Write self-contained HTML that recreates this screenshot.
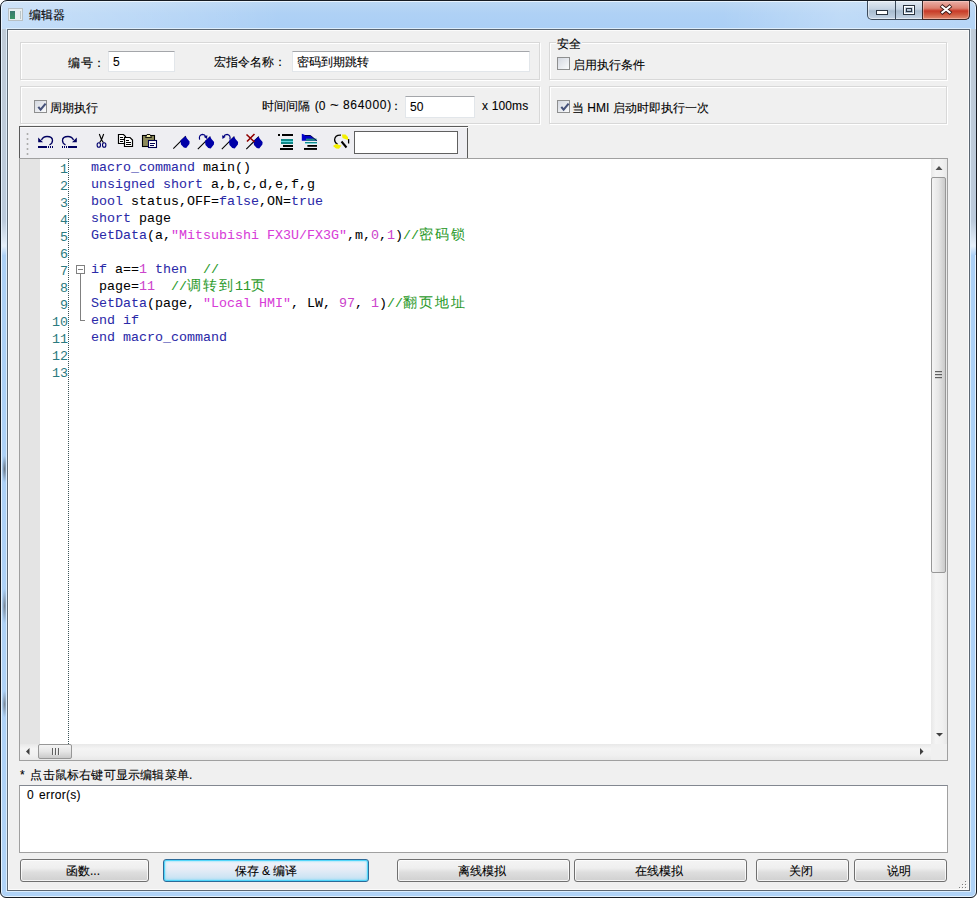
<!DOCTYPE html>
<html><head><meta charset="utf-8">
<style>
*{margin:0;padding:0;box-sizing:border-box}
html,body{width:977px;height:898px;overflow:hidden;background:#fff}
body{position:relative;font-family:"Liberation Sans",sans-serif;font-size:12px;color:#000;-webkit-text-stroke:0.1px #000}
.a{position:absolute;white-space:pre}
#win{left:0;top:0;width:977px;height:898px;border:1px solid #161b22;border-radius:7px 7px 6px 6px;
 background:linear-gradient(90deg,rgba(255,255,255,0.32) 0px,rgba(255,255,255,0.18) 140px,rgba(255,255,255,0) 280px,rgba(255,255,255,0) 720px,rgba(255,255,255,0.22) 840px,rgba(255,255,255,0.12) 977px) 0 0/100% 29px no-repeat,linear-gradient(#bcd8f4 0px,#afd1f5 12px,#aacff5 29px,#b0d3f7 100%);box-shadow:inset 0 0 0 1px rgba(240,248,255,0.85)}
#client{left:7px;top:29px;width:963px;height:862px;border:1px solid #5c6772;background:#f0f0f0;box-shadow:0 0 0 1px rgba(225,240,252,0.9),inset 0 0 0 1px #fbfbfb}
.gb{border:1px solid #d8d8d8;box-shadow:inset 1px 1px 0 #fff,1px 1px 0 #fff}
.inp{background:#fff;border:1px solid #e2e6ea;border-top-color:#a4a6aa;}
.cb{width:13px;height:13px;border:1px solid #8e8f8f;background:linear-gradient(135deg,#d4d8e0,#fafbfc)}
.cb svg{position:absolute;left:1px;top:1px}
.btn{border:1px solid #707070;border-radius:3px;background:linear-gradient(#f4f4f4 0%,#efefef 38%,#dedede 58%,#d0d0d0 100%);box-shadow:inset 0 0 0 1px rgba(255,255,255,0.75);text-align:center;line-height:22px;padding-right:3px}
.mono{font-family:"Liberation Mono",monospace;font-size:13.33px;line-height:17px;-webkit-text-stroke:0.05px currentColor}
.k{color:#2a2aa8}.s{color:#d83cd8}.n{color:#cc44cc}.c{color:#2a9a2a}
.cj{font-size:14px;letter-spacing:2px}
.ln{font-family:"Liberation Mono",monospace;font-size:13.33px;color:#2a7a80;text-align:right;width:41px;line-height:17px;-webkit-text-stroke:0}
</style></head><body>
<div id="win" class="a"></div>
<!-- title -->
<div class="a" style="left:8px;top:8px;width:15px;height:13px;background:#e8eef0;border:1px solid #b8c0c4"></div>
<div class="a" style="left:10px;top:11px;width:5px;height:8px;background:linear-gradient(#3a7870,#3a9464)"></div><div class="a" style="left:20px;top:11px;width:1px;height:8px;background:#b8c4c8"></div>
<div class="a" style="left:29px;top:7px;font-size:12px">编辑器</div>
<!-- caption buttons -->
<div class="a" style="left:867px;top:1px;width:103px;height:19px;border:1px solid #3c4a5a;border-top:none;border-radius:0 0 5px 5px;overflow:hidden;background:linear-gradient(#e2eaf3,#c4d2e2 45%,#a8bccf 55%,#c4d4e6);box-shadow:inset 0 0 0 1px rgba(255,255,255,0.5)"></div>
<div class="a" style="left:922px;top:1px;width:48px;height:19px;border:1px solid #3c2a2a;border-top:none;border-radius:0 0 5px 0;background:linear-gradient(#eab0a8,#dc8070 40%,#c83a28 55%,#d05a40 75%,#e08a70);box-shadow:inset 0 0 0 1px rgba(255,220,210,0.45)"></div>
<div class="a" style="left:895px;top:1px;width:1px;height:18px;background:#3c4a5a"></div>

<svg class="a" style="left:867px;top:0" width="103" height="20" viewBox="867 0 103 20">
<rect x="876.5" y="10.5" width="11" height="4" fill="#fff" stroke="#2a3440" stroke-width="1"/>
<rect x="903.5" y="5.5" width="11" height="9" fill="none" stroke="#2a3440" stroke-width="1"/>
<rect x="904.5" y="6.5" width="9" height="7" fill="none" stroke="#fff" stroke-width="1"/>
<rect x="906.5" y="8.5" width="5" height="3" fill="none" stroke="#2a3440" stroke-width="1"/>
<path d="M941 5.5 L951 13.5 M951 5.5 L941 13.5" stroke="#3a1a18" stroke-width="4"/>
<path d="M941.5 6 L950.5 13 M950.5 6 L941.5 13" stroke="#fff" stroke-width="2.2"/>
</svg>
<div class="a" style="left:2px;top:29px;width:5px;height:226px;background:linear-gradient(#c0ccd8,#bccbdc 85%,#e6f0fa 96%,#b0d2f6)"></div>
<div class="a" style="left:970px;top:29px;width:6px;height:226px;background:linear-gradient(#c0ccd8,#bccbdc 85%,#e6f0fa 96%,#b0d2f6)"></div>
<div class="a" style="left:2px;top:455px;width:5px;height:28px;background:radial-gradient(ellipse at center,#6a7888 0%,rgba(106,120,136,0) 70%)"></div>
<div class="a" style="left:2px;top:588px;width:5px;height:36px;background:radial-gradient(ellipse at center,#7a8898 0%,rgba(122,136,152,0) 70%)"></div>
<div class="a" style="left:2px;top:690px;width:5px;height:28px;background:radial-gradient(ellipse at center,#7a8898 0%,rgba(122,136,152,0) 70%)"></div>
<div id="client" class="a"></div>
<!-- group boxes -->
<div class="a gb" style="left:20px;top:42px;width:520px;height:38px"></div>
<div class="a gb" style="left:20px;top:86px;width:520px;height:38px"></div>
<div class="a gb" style="left:549px;top:42px;width:398px;height:38px"></div>
<div class="a gb" style="left:549px;top:86px;width:398px;height:38px"></div>

<!-- row 1 -->
<div class="a" style="left:68px;top:55px;letter-spacing:0.5px">编号：</div>
<div class="a inp" style="left:108px;top:51px;width:67px;height:21px"></div>
<div class="a" style="left:113px;top:55px">5</div>
<div class="a" style="left:214px;top:54px">宏指令名称：</div>
<div class="a inp" style="left:292px;top:51px;width:238px;height:21px"></div>
<div class="a" style="left:297px;top:54px">密码到期跳转</div>
<div class="a" style="left:556px;top:36px;background:#f0f0f0;padding:0 1px">安全</div>
<div class="a cb" style="left:557px;top:57px"></div>
<div class="a" style="left:573px;top:57px">启用执行条件</div>

<!-- row 2 -->
<div class="a cb" style="left:34px;top:100px"><svg width="11" height="11"><path d="M2.3 4.8 L4.6 7.6 L9.6 1.6" stroke="#46527a" stroke-width="2.1" fill="none"/></svg></div>
<div class="a" style="left:50px;top:100px">周期执行</div>
<div class="a" style="left:262px;top:98px;word-spacing:1.5px">时间间隔 (0</div><div class="a" style="left:330px;top:98px;transform:scaleX(1.25);transform-origin:0 0">~</div><div class="a" style="left:343px;top:98px;letter-spacing:0.7px">864000)</div><div class="a" style="left:390px;top:98px">：</div>
<div class="a inp" style="left:405px;top:96px;width:70px;height:22px"></div>
<div class="a" style="left:410px;top:100px">50</div>
<div class="a" style="left:482px;top:99px;letter-spacing:0.15px">x 100ms</div>
<div class="a cb" style="left:557px;top:100px"><svg width="11" height="11"><path d="M2.3 4.8 L4.6 7.6 L9.6 1.6" stroke="#46527a" stroke-width="2.1" fill="none"/></svg></div>
<div class="a" style="left:572px;top:100px">当 HMI 启动时即执行一次</div>

<!-- toolbar -->
<div class="a" style="left:19px;top:126px;width:449px;height:34px;border:1px solid #5a5a5a;border-bottom:none;background:#eeeef2"></div>
<svg class="a" style="left:19px;top:126px" width="450" height="33" viewBox="19 126 450 33">
<rect x="20" y="127" width="448" height="1" fill="#fafafa"/>
<g fill="#a8a8a8"><rect x="26.5" y="133" width="2" height="2" rx="1"/><rect x="26.5" y="138" width="2" height="2" rx="1"/><rect x="26.5" y="143" width="2" height="2" rx="1"/><rect x="26.5" y="148" width="2" height="2" rx="1"/><rect x="26.5" y="153" width="2" height="2" rx="1"/></g>
<g>
<path d="M41.5 140 Q43 136.5 47 136.5 Q52.5 136.5 52.5 140.5 Q52.5 143.5 49.5 144.8" stroke="#000060" stroke-width="1.3" fill="none"/>
<polygon points="38.2,137.6 38.2,142.3 43,142.3" fill="#000060"/>
<rect x="38" y="146" width="9" height="2" fill="#000060"/>
<rect x="48" y="146" width="1" height="2" fill="#000060"/><rect x="50" y="146" width="1" height="2" fill="#000060"/><rect x="52" y="146" width="1" height="2" fill="#000060"/>
</g>
<g transform="matrix(-1 0 0 1 115 0)">
<path d="M41.5 140 Q43 136.5 47 136.5 Q52.5 136.5 52.5 140.5 Q52.5 143.5 49.5 144.8" stroke="#000060" stroke-width="1.3" fill="none"/>
<polygon points="38.2,137.6 38.2,142.3 43,142.3" fill="#000060"/>
<rect x="38" y="146" width="9" height="2" fill="#000060"/>
<rect x="48" y="146" width="1" height="2" fill="#000060"/><rect x="50" y="146" width="1" height="2" fill="#000060"/><rect x="52" y="146" width="1" height="2" fill="#000060"/>
</g>
<!-- cut -->
<path d="M99.3 134 L101.5 139.8 L99.6 142.6 M103.7 134 L101.5 139.8 L103.4 142.6" stroke="#000" stroke-width="1.1" fill="none"/>
<ellipse cx="98.8" cy="145" rx="1.7" ry="2.3" stroke="#000070" stroke-width="1.1" fill="none"/>
<ellipse cx="104.2" cy="145" rx="1.7" ry="2.3" stroke="#000070" stroke-width="1.1" fill="none"/>
<!-- copy -->
<path d="M118.5 134.5 H123.5 L125.5 136.5 V143.5 H118.5 Z" fill="#fff" stroke="#000" stroke-width="1.2"/>
<path d="M120 137.5 H123 M120 139.5 H124 M120 141.5 H123" stroke="#000" stroke-width="1"/>
<path d="M124.5 137.5 H130 L132.5 140 V146.5 H124.5 Z" fill="#fff" stroke="#000" stroke-width="1.2"/>
<path d="M126 140.5 H129 M126 142.5 H131 M126 144.5 H131" stroke="#000" stroke-width="1"/>
<!-- paste -->
<rect x="142.5" y="135.5" width="12" height="11" fill="#8c8a5a" stroke="#000" stroke-width="1.1"/>
<path d="M145.5 137.5 L147 134.5 H150 L151.5 137.5 Z" fill="#f4f0b0" stroke="#000" stroke-width="0.9"/>
<rect x="148.5" y="140.5" width="8" height="7" fill="#fff" stroke="#000050" stroke-width="1.1"/>
<path d="M150 143.5 H155 M150 145.5 H154" stroke="#000050" stroke-width="1"/>
<!-- flags -->
<g>
<path d="M173.3 148.6 L185.8 136.1" stroke="#000" stroke-width="1.1"/>
<polygon points="180.4,140.6 185.6,136 187,138.6 189.6,141.6 189.4,144 186.2,148 183.8,147.6 181,144.6" fill="#0000a8"/>
</g>
<g transform="translate(24.5 0.5)">
<path d="M173.3 148.6 L185.8 136.1" stroke="#000" stroke-width="1.1"/>
<polygon points="180.4,140.6 185.6,136 187,138.6 189.6,141.6 189.4,144 186.2,148 183.8,147.6 181,144.6" fill="#0000a8"/>
</g>
<path d="M199.6 139.6 Q198.6 135 202.4 134.4 Q205 134.4 205.6 136.5" stroke="#000080" stroke-width="1.2" fill="none"/>
<polygon points="203.8,136.8 207.4,135.2 207,139 " fill="#000080"/>
<g transform="translate(48.5 0.5)">
<path d="M173.3 148.6 L185.8 136.1" stroke="#000" stroke-width="1.1"/>
<polygon points="180.4,140.6 185.6,136 187,138.6 189.6,141.6 189.4,144 186.2,148 183.8,147.6 181,144.6" fill="#0000a8"/>
</g>
<g transform="matrix(-1 0 0 1 429.5 0)"><path d="M199.6 139.6 Q198.6 135 202.4 134.4 Q205 134.4 205.6 136.5" stroke="#000080" stroke-width="1.2" fill="none"/>
<polygon points="203.8,136.8 207.4,135.2 207,139 " fill="#000080"/></g>
<g transform="translate(73 0.5)">
<path d="M173.3 148.6 L185.8 136.1" stroke="#000" stroke-width="1.1"/>
<polygon points="180.4,140.6 185.6,136 187,138.6 189.6,141.6 189.4,144 186.2,148 183.8,147.6 181,144.6" fill="#0000a8"/>
</g>
<path d="M246.5 134.5 L254.5 142 M254.5 134 L247 141.5" stroke="#900000" stroke-width="1.6"/>
<!-- indent -->
<rect x="278" y="134" width="2" height="2" fill="#000"/>
<rect x="282" y="134" width="11" height="2" fill="#000"/>
<rect x="281" y="139" width="12" height="2" fill="#108888"/><rect x="281" y="141" width="12" height="1" fill="#60d8e0"/>
<rect x="281" y="142" width="12" height="2" fill="#108888"/><rect x="281" y="144" width="12" height="0" fill="#60d8e0"/>
<rect x="283" y="145" width="10" height="2" fill="#000"/>
<rect x="280" y="148" width="13" height="2" fill="#000"/>
<!-- outdent -->
<polygon points="301.8,133.8 304,134.5 305.5,135.5 310.5,135.5 316.8,140.8 301.8,140.8" fill="#0000c8"/>
<rect x="306" y="138.6" width="10.6" height="2.2" fill="#208080"/>
<path d="M305 135.5 H310.5 L316.8 140.8" stroke="#000050" stroke-width="1" fill="none"/>
<rect x="305" y="142" width="12" height="1.2" fill="#188888"/><rect x="305" y="143.2" width="12" height="0.8" fill="#70d8e0"/>
<rect x="307.4" y="145" width="9.6" height="1.8" fill="#000"/>
<rect x="304" y="148" width="13" height="1.9" fill="#000"/>
<!-- find/replace -->
<path d="M341 135.2 Q335 134.8 334.6 139.8 Q334.8 143 337.6 144.4" stroke="#000" stroke-width="1.3" fill="none"/>
<path d="M341.5 141.5 L346.5 147.5" stroke="#000" stroke-width="2"/>
<path d="M348.6 139 V143.5" stroke="#000" stroke-width="1.3"/>
<polygon points="342,134.5 345.5,134.5 348,137 348.2,140 345,139 342.5,138" fill="#f4f000"/>
<polygon points="333,146 336.5,143.8 339,145 341.5,145.5 339,148.8 336,148.5" fill="#f4f000"/>
</svg>
<div class="a inp" style="left:354px;top:131px;width:104px;height:23px;border:1px solid #606060"></div>

<!-- editor -->
<div class="a" style="left:19px;top:158px;width:929px;height:603px;border:1px solid #a0a0a0;background:#fff"></div>
<div class="a" style="left:20px;top:159px;width:20px;height:585px;background:#e4e4e4"></div>
<div class="a" style="left:68px;top:159px;width:1px;height:585px;background:repeating-linear-gradient(#3c5458 0 1px,transparent 1px 2px)"></div>

<div id="lns" class="a" style="left:27px;top:161px;white-space:normal"><div class="ln">1</div><div class="ln">2</div><div class="ln">3</div><div class="ln">4</div><div class="ln">5</div><div class="ln">6</div><div class="ln">7</div><div class="ln">8</div><div class="ln">9</div><div class="ln">10</div><div class="ln">11</div><div class="ln">12</div><div class="ln">13</div>
</div>

<div id="code" class="a mono" style="left:91px;top:159px"><span class="k">macro_command</span> main()
<span class="k">unsigned</span> <span class="k">short</span> a,b,c,d,e,f,g
<span class="k">bool</span> status,OFF=<span class="k">false</span>,ON=<span class="k">true</span>
<span class="k">short</span> page
<span class="k">GetData</span>(a,<span class="s">"Mitsubishi FX3U/FX3G"</span>,m,<span class="n">0</span>,<span class="n">1</span>)<span class="c">//<span class="cj">密码锁</span></span>

<span class="k">if</span> a==<span class="n">1</span> <span class="k">then</span>  <span class="c">//</span>
 page=<span class="n">11</span>  <span class="c">//<span class="cj">调转到</span>11<span class="cj">页</span></span>
<span class="k">SetData</span>(page, <span class="s">"Local HMI"</span>, LW, <span class="n">97</span>, <span class="n">1</span>)<span class="c">//<span class="cj">翻页地址</span></span>
<span class="k">end</span> <span class="k">if</span>
<span class="k">end</span> <span class="k">macro_command</span>
</div>

<!-- fold markers -->
<div class="a" style="left:76px;top:265px;width:9px;height:9px;border:1px solid #808080;background:#fff"></div>
<div class="a" style="left:78px;top:269px;width:5px;height:1px;background:#808080"></div>
<div class="a" style="left:80px;top:274px;width:1px;height:47px;background:#808080"></div>
<div class="a" style="left:80px;top:320px;width:5px;height:1px;background:#808080"></div>

<!-- v scrollbar -->
<div class="a" style="left:931px;top:159px;width:16px;height:585px;background:linear-gradient(90deg,#e8e8e8,#f4f4f4 30%,#f0f0f0 70%,#e8e8e8)"></div>
<div class="a" style="left:931px;top:177px;width:15px;height:396px;border:1px solid #979797;border-radius:2px;background:linear-gradient(90deg,#f4f4f4,#e6e6e6 50%,#cacaca 100%)"></div>
<!-- h scrollbar -->
<div class="a" style="left:20px;top:744px;width:911px;height:16px;background:linear-gradient(#e8e8e8,#f4f4f4 30%,#f0f0f0 70%,#e8e8e8)"></div>
<div class="a" style="left:38px;top:744px;width:34px;height:15px;border:1px solid #979797;border-radius:2px;background:linear-gradient(#f4f4f4,#e6e6e6 50%,#cacaca 100%)"></div>
<div class="a" style="left:931px;top:744px;width:16px;height:16px;background:#f0f0f0"></div>
<svg class="a" style="left:0;top:0" width="977" height="898" viewBox="0 0 977 898">
<polygon points="935.5,170 939,166 942.5,170" fill="#505050"/>
<polygon points="936,733 939.5,736.5 943,733" fill="#404040"/>
<polygon points="29.5,748 26,751.5 29.5,755" fill="#404040"/>
<polygon points="920,748 923.5,751.5 920,755" fill="#404040"/>
<g fill="#606060"><rect x="52" y="748" width="1.2" height="7"/><rect x="55" y="748" width="1.2" height="7"/><rect x="58" y="748" width="1.2" height="7"/></g>
<g fill="#f8f8f8"><rect x="53.2" y="748" width="0.8" height="7"/><rect x="56.2" y="748" width="0.8" height="7"/><rect x="59.2" y="748" width="0.8" height="7"/></g>
<g fill="#606060"><rect x="935" y="371" width="7" height="1.2"/><rect x="935" y="374" width="7" height="1.2"/><rect x="935" y="377" width="7" height="1.2"/></g>
</svg>

<!-- hint -->
<div class="a" style="left:20px;top:767px;letter-spacing:0.2px;word-spacing:2px">* 点击鼠标右键可显示编辑菜单.</div>
<!-- error box -->
<div class="a" style="left:19px;top:785px;width:929px;height:68px;border:1px solid #a0a0a0;border-top-color:#828790;background:#fff"></div>
<div class="a" style="left:27px;top:788px;letter-spacing:0.3px;word-spacing:1.5px">0 error(s)</div>

<!-- buttons -->
<div class="a btn" style="left:20px;top:859px;width:129px;height:23px">函数...</div>
<div class="a btn" style="left:163px;top:859px;width:206px;height:23px;padding-right:0;border-color:#2c6a98;background:linear-gradient(#f2f4fa 0%,#e6ecf6 45%,#d2e6f4 75%,#bfe0f4 100%);box-shadow:inset 0 0 1px 1px #48d4fa,inset 0 0 3px 1px rgba(100,220,250,0.6)">保存 &amp; 编译</div>
<div class="a btn" style="left:397px;top:859px;width:173px;height:23px">离线模拟</div>
<div class="a btn" style="left:574px;top:859px;width:173px;height:23px">在线模拟</div>
<div class="a btn" style="left:756px;top:859px;width:93px;height:23px">关闭</div>
<div class="a btn" style="left:854px;top:859px;width:93px;height:23px">说明</div>
<svg class="a" style="left:955px;top:876px" width="14" height="14"><g fill="#fff"><rect x="11" y="6" width="1" height="1"/><rect x="8" y="9" width="1" height="1"/><rect x="11" y="9" width="1" height="1"/><rect x="5" y="12" width="1" height="1"/><rect x="8" y="12" width="1" height="1"/><rect x="11" y="12" width="1" height="1"/></g><g fill="#7c7c7c"><rect x="10" y="5" width="1" height="1"/><rect x="7" y="8" width="1" height="1"/><rect x="10" y="8" width="1" height="1"/><rect x="4" y="11" width="1" height="1"/><rect x="7" y="11" width="1" height="1"/><rect x="10" y="11" width="1" height="1"/></g></svg>
</body></html>
